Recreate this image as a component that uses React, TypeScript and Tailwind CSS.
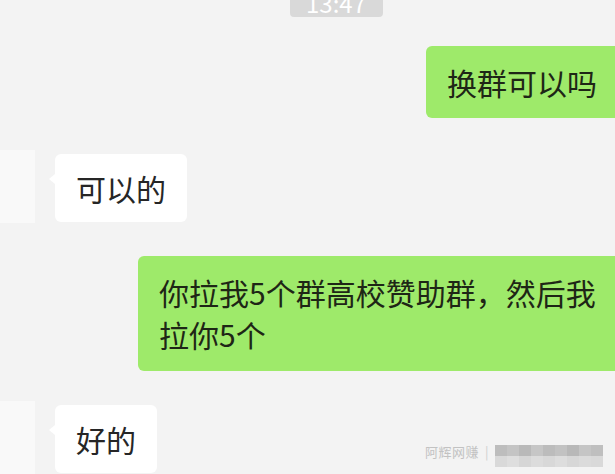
import React from "react";

const font = { fontFamily: '"Microsoft YaHei", "Noto Sans CJK SC", "Noto Sans", sans-serif' };

function LeftRow({ text, className }: { text: string; className?: string }) {
  return (
    <div className={`flex items-start ${className ?? ""}`}>
      <div className="w-[35px] h-[73px] bg-[#f9f9f9] shrink-0" />
      <div className="relative ml-[20px] mt-[4px] rounded-[6px] bg-white px-[21px] py-[13px] text-[30px] leading-[42px] text-[#262626]">
        <span className="absolute left-[-6px] top-[20px] h-0 w-0 border-y-[5px] border-r-[6px] border-y-transparent border-r-white" />
        {text}
      </div>
    </div>
  );
}

function RightRow({ children, className, bubbleClass }: { children: React.ReactNode; className?: string; bubbleClass?: string }) {
  return (
    <div className={`flex justify-end ${className ?? ""}`}>
      <div className={`mr-[-10px] rounded-[6px] bg-[#9eea6a] pl-[21px] pr-[28px] text-[30px] leading-[42px] text-[#1e2616] ${bubbleClass ?? "py-[15px]"}`}>
        {children}
      </div>
    </div>
  );
}

const mosaic = [
  "#bdbdbd", "#c4c4c4", "#b9b9b9", "#c6c6c6", "#bcbcbc", "#c2c2c2", "#b8b8b8", "#c5c5c5", "#bfbfbf",
  "#d9d9d9", "#dedede", "#d6d6d6", "#dcdcdc", "#d8d8d8", "#dddddd", "#d7d7d7", "#dbdbdb", "#d9d9d9",
];

export default function App() {
  return (
    <div className="relative w-[615px] h-[474px] overflow-hidden bg-[#f3f3f3]" style={font}>
      <div className="flex flex-col">
        <div className="flex justify-center">
          <div className="mt-[-11px] ml-[57px] h-[28px] w-[93px] rounded-[4px] bg-[#d9d9d9] text-center text-[24px] leading-[24px] pt-[2px] text-white">
            13:47
          </div>
        </div>

        <RightRow className="mt-[29px]">换群可以吗</RightRow>

        <LeftRow text="可以的" className="mt-[32px]" />

        <RightRow className="mt-[33px]" bubbleClass="w-[487px] pt-[15px] pb-[16px]">
          你拉我5个群高校赞助群，然后我拉你5个
        </RightRow>

        <LeftRow text="好的" className="mt-[30px]" />
      </div>

      <div className="absolute left-[425px] top-[445px] flex items-start">
        <span className="text-[13px] leading-[14px] tracking-[0.5px] text-[#c2c2c2]">阿辉网赚</span>
        <span className="ml-[6px] text-[13px] leading-[14px] text-[#cfcfcf]">|</span>
        <div className="ml-[6px] grid grid-cols-9 w-[108px]">
          {mosaic.map((c, i) => (
            <div key={i} className="h-[11px]" style={{ backgroundColor: c }} />
          ))}
        </div>
      </div>
    </div>
  );
}
